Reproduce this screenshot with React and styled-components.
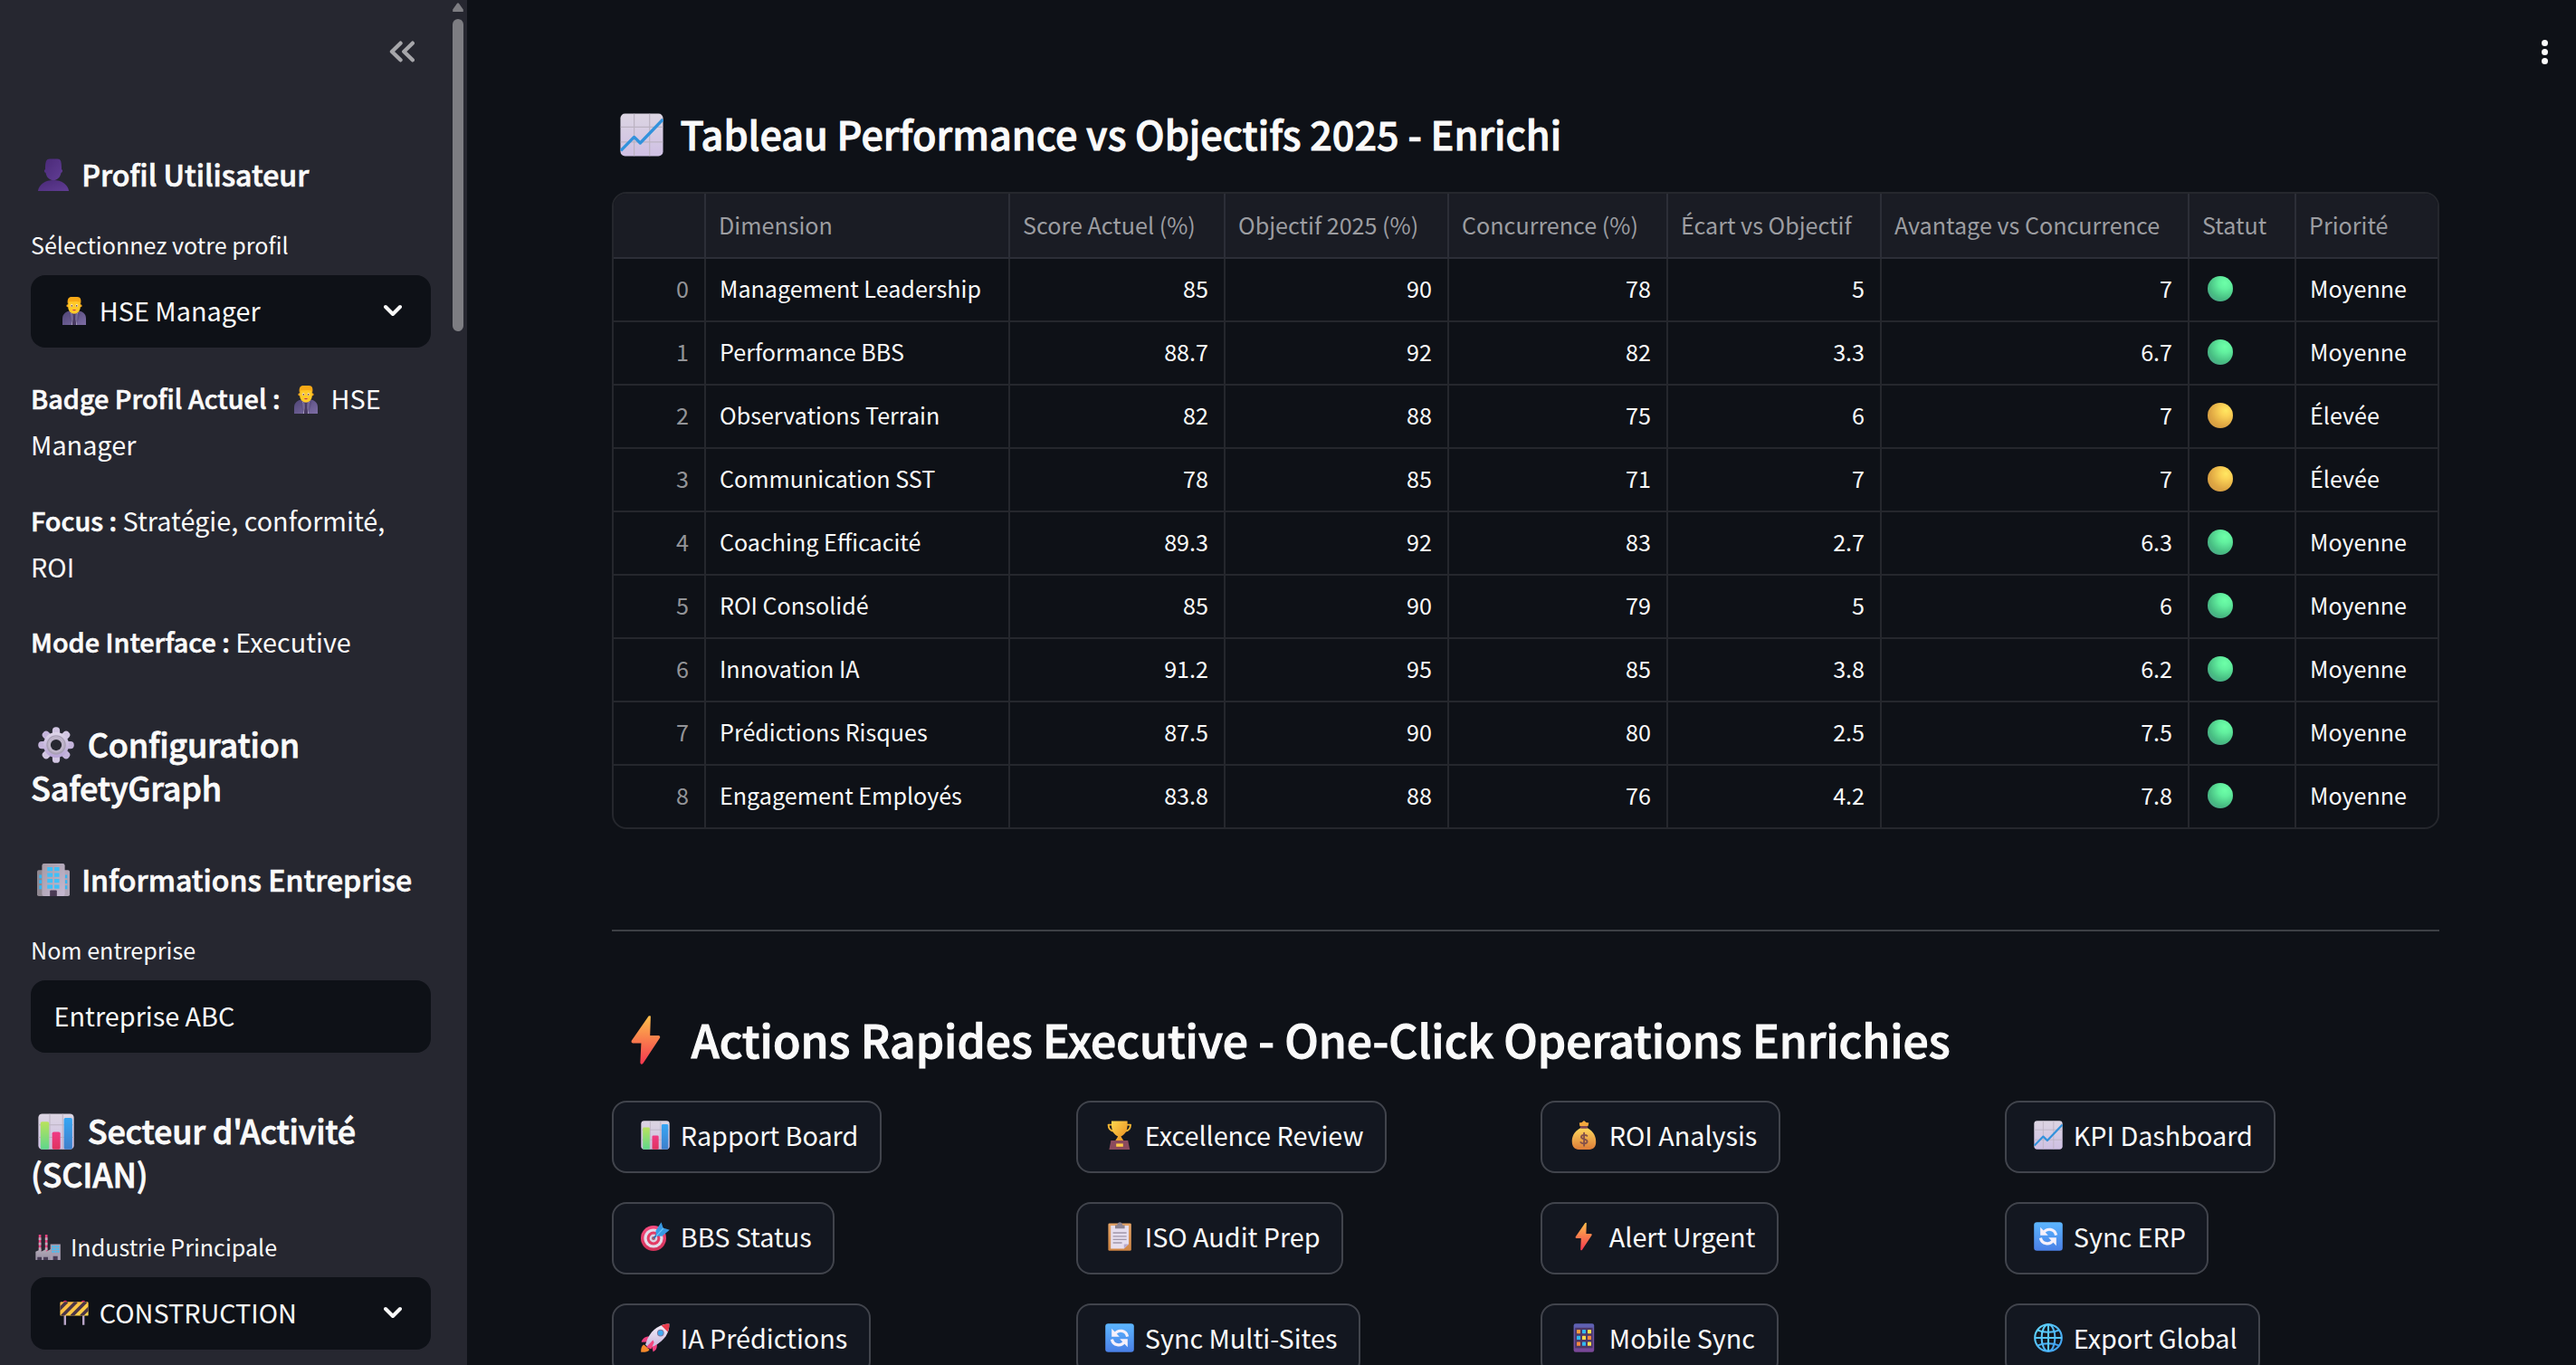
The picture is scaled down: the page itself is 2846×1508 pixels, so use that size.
import React, { useId } from "react";
import styled, { createGlobalStyle } from "styled-components";

const GlobalStyle = createGlobalStyle`
  *, *::before, *::after { box-sizing: border-box; }
  body {
    margin: 0;
    background: #0e1117;
    color: #fafafa;
    font-family: "Noto Sans CJK SC", "Noto Sans", sans-serif;
    font-size: 28.8px;
    -webkit-font-smoothing: antialiased;
  }
  h2, h3, p { margin: 0; }
`;

/* ---------- emoji artwork, all on a 32-unit grid ---------- */

const EmojiSvg = styled.svg`
  display: inline-block;
  flex: none;
  width: ${(p) => p.$size}px;
  height: ${(p) => p.$size}px;
  margin: 0 ${(p) => p.$after}px 0 ${(p) => p.$before}px;
  vertical-align: ${(p) => -0.145 * p.$size}px;
`;

const gradient = (id, from, to, diagonal) => (
  <linearGradient id={id} x1="0" y1="0" x2={diagonal ? "1" : "0"} y2="1">
    <stop offset="0" stopColor={from} />
    <stop offset="1" stopColor={to} />
  </linearGradient>
);

const paper = (id) => (
  <>
    {gradient(id, "#dcd5e2", "#cfc0e4")}
    <rect x="0.3" y="0.3" width="31.4" height="31.4" rx="3.4" fill={`url(#${id})`} />
    <path d="M10.4 0.5V31.5M21.8 0.5V31.5M0.5 10.2H31.5M0.5 21.2H31.5" stroke="#bcb3c2" strokeWidth="0.8" />
  </>
);

const drawings = {
  chartUp: (id) => (
    <>
      {paper(id)}
      <path d="M0.6 27.6L10.4 17.6L14.9 22L31.6 4.6" fill="none" stroke="#3292dc" strokeWidth="2.2" strokeLinejoin="round" />
    </>
  ),
  barChart: (id) => (
    <>
      {paper(id)}
      {gradient(id + "g", "#b9e35c", "#5fd68c")}
      {gradient(id + "b", "#36a6f4", "#3f7fcb")}
      {gradient(id + "p", "#f03a86", "#e0345f")}
      <rect x="2.2" y="7.4" width="7.6" height="24.4" rx="1.4" fill={`url(#${id}g)`} />
      <rect x="12.5" y="16.4" width="7.2" height="15.4" rx="1.4" fill={`url(#${id}p)`} />
      <rect x="22.9" y="4" width="7.4" height="27.8" rx="1.4" fill={`url(#${id}b)`} />
    </>
  ),
  silhouette: (id) => (
    <>
      {gradient(id, "#4a2a78", "#613d94", true)}
      <path d="M8 10.8C8 3 8.8 0.4 12.5 0.4H20C23.4 0.4 24 3 24 10.8C25.6 10.8 25 14 23.6 14C22.8 18.6 19.8 21.4 16 21.4S9.2 18.6 8.4 14C7 14 6.4 10.8 8 10.8Z" fill={`url(#${id})`} />
      <path d="M0.8 32C2 25.6 8 21.4 16 21.4S30 25.6 31.2 32Z" fill={`url(#${id})`} />
    </>
  ),
  manager: (id) => (
    <>
      {gradient(id, "#4f4576", "#7d6da4", true)}
      <path d="M3 32V25C3 19.5 7.5 16.5 12 16.5H20C25 16.5 29 19.5 29 25V32Z" fill={`url(#${id})`} />
      <path d="M12 18.5L16 23L20 18.5L18.8 32H13.2Z" fill="#ded5ea" />
      <path d="M14.8 20H17.2L18.2 32H13.8Z" fill="#483a62" />
      <path d="M9 17.5L13.2 31.8L15.4 21ZM23 17.5L18.8 31.8L16.6 21Z" fill="#5a4f81" opacity="0.8" />
      <circle cx="8.9" cy="10.8" r="1.5" fill="#f2a21c" />
      <circle cx="23.1" cy="10.8" r="1.5" fill="#f2a21c" />
      <path d="M9.2 7C9.2 3 22.8 3 22.8 7V12C22.8 16.4 19.8 19.6 16 19.6S9.2 16.4 9.2 12Z" fill="#ffc928" />
      <path d="M8.8 8.6C8 3.4 10 1 13 1H19.5C23 1 24 4 23.2 8.6L21.5 6.6C18 5 14 6.8 10.4 6.2Z" fill="#f8a916" />
      <ellipse cx="13.2" cy="10.6" rx="1.3" ry="1.6" fill="#fff3d9" />
      <ellipse cx="18.8" cy="10.6" rx="1.3" ry="1.6" fill="#fff3d9" />
      <circle cx="13.3" cy="10.8" r="0.85" fill="#6b4034" />
      <circle cx="18.7" cy="10.8" r="0.85" fill="#6b4034" />
      <path d="M13.8 15.2Q16 14.6 18.2 15.2Q16 17.4 13.8 15.2Z" fill="#c02c57" />
    </>
  ),
  gear: (id) => (
    <>
      {gradient(id, "#ded6e8", "#b7a3d6")}
      <g>
        {[0, 45, 90, 135].map((a) => (
          <rect key={a} x="12.7" y="0.2" width="6.6" height="31.6" rx="3.1" transform={`rotate(${a} 16 16)`} fill={a > 60 ? "#c4b4db" : "#d2c6e2"} />
        ))}
      </g>
      <circle cx="16" cy="16" r="11.2" fill={`url(#${id})`} />
      <circle cx="16" cy="16" r="8.6" fill="#aaa1b6" />
      <circle cx="16" cy="15.6" r="7.4" fill="#bfb5ca" />
      <circle cx="16" cy="16" r="4.9" fill="#262730" />
    </>
  ),
  building: (id) => (
    <>
      {gradient(id, "#a59ba6", "#c6b9d2", true)}
      <rect y="6.4" width="10" height="25.6" rx="1.6" fill="#8f8790" />
      <rect x="22" y="6.4" width="10" height="25.6" rx="1.6" fill="#b0a5b6" />
      {[11, 16.2, 21.6].map((y) => (
        <path key={y} d={`M2 ${y}H4.6V${y + 3.4}H2ZM27.4 ${y}H29.6V${y + 3.4}H27.4Z`} fill="#35b5f2" />
      ))}
      <rect x="4.8" width="22.4" height="32" rx="2" fill={`url(#${id})`} />
      {[3.6, 9.3, 15, 20.8].map((y) => (
        <path key={y} d={`M10 ${y}H15.2V${y + 3.8}H10ZM17 ${y}H21.8V${y + 3.8}H17Z`} fill="#3fc0f8" />
      ))}
      <path d="M12.6 32V27.2Q12.6 26.2 13.6 26.2H18.4Q19.4 26.2 19.4 27.2V32Z" fill="#4a3a54" />
    </>
  ),
  factory: (id) => (
    <>
      {gradient(id, "#b3aab8", "#988fa3")}
      {[4.3, 12.4].map((x) => (
        <g key={x}>
          <rect x={x} width="3" height="22" fill="#e8447f" />
          <path d={`M${x} 3.6h3v3.2h-3zM${x} 10h3v3.2h-3zM${x} 16.4h3v3.2h-3z`} fill="#b9aebb" />
        </g>
      ))}
      <path d="M0.4 32V21.5L7.4 18.2V21.4L13.6 18.2V21.4L19.6 18.4V32Z" fill={`url(#${id})`} />
      <rect x="19" y="12" width="12.8" height="20" fill="#a59cb0" />
      {[13.8, 17, 20.2].map((y) => (
        <path key={y} d={`M21 ${y}h2.4v2.4h-2.4zM24.4 ${y}h2.4v2.4h-2.4zM27.8 ${y}h2.4v2.4h-2.4z`} fill="#42c1f7" />
      ))}
      <path d="M2.6 28.4H8V32H2.6ZM10.4 28.4H16V32H10.4ZM22.4 27H28.2V32H22.4Z" fill="#463a54" />
    </>
  ),
  barrier: (id) => (
    <>
      {gradient(id, "#ffb341", "#ffd94a", true)}
      <clipPath id={id + "c"}><rect x="0.4" y="4.2" width="31.2" height="15.4" rx="1.2" /></clipPath>
      <ellipse cx="6" cy="4.2" rx="2" ry="1.4" fill="#d51f66" />
      <ellipse cx="26" cy="4.2" rx="2" ry="1.4" fill="#d51f66" />
      <path d="M4.6 19H7V29.8H4.6ZM25 19H27.4V29.8H25Z" fill="#b7a4c6" />
      <g clipPath={`url(#${id}c)`}>
        <rect y="4" width="32" height="16" fill={`url(#${id})`} />
        <path d="M-8 20L8 4M2.5 20L18.5 4M13 20L29 4M23.5 20L39.5 4" stroke="#4a3548" strokeWidth="3.6" />
      </g>
    </>
  ),
  bolt: (id) => (
    <>
      {gradient(id, "#fdc04b", "#f5374f")}
      <path d="M18.8 0.9Q17.4 0.2 16.8 1.8L6.6 16.6Q6.4 17.9 7.5 18H12.8L12.2 30.4Q12.9 32 14 30.7L24.7 14.4Q25 13.2 23.8 13.1H18.4Z" fill={`url(#${id})`} />
    </>
  ),
  trophy: (id) => (
    <>
      {gradient(id, "#ffd84f", "#e88a1e", true)}
      <path d="M8 4.6H3.6C3.6 9.4 5.6 11.4 10 11.8M23.6 4.6H28C28 9.4 26 11.4 21.6 11.8" fill="none" stroke="#f3b533" strokeWidth="1.9" strokeLinejoin="round" />
      <path d="M7 0.4H24.6V5C24.6 11.6 21.4 16 17.4 17.4L20.6 22.6H11L14.2 17.4C10.2 16 7 11.6 7 5Z" fill={`url(#${id})`} />
      <path d="M6.4 22H25.2L27.2 32H4.4Z" fill="#8b4b5d" />
      <rect x="12.2" y="25.4" width="7.6" height="3.4" fill="#ffcb48" />
    </>
  ),
  moneyBag: (id) => (
    <>
      {gradient(id, "#ffd75c", "#dc7c38")}
      <path d="M11.4 6.2L10.8 2.4L13.6 2L16 0L18.4 2L21.4 2.4L20.4 6.2Z" fill="#f4a83d" />
      <path d="M12.4 8C4.4 12.4 2.4 18.4 2.8 24C3 29 6 31.9 10 31.9H22C26.4 31.9 29.2 29 29.2 24C29.4 18.4 27.4 12.4 19.6 8Z" fill={`url(#${id})`} />
      <rect x="12" y="6" width="8" height="2.8" rx="1" fill="#7f4650" />
      <path d="M19.4 16.8C18.2 15.4 13 15.3 13 18.2C13 21 19.6 19.6 19.6 23C19.6 26 13.8 26 12.4 24M16.1 13.8V27.8" fill="none" stroke="#85514a" strokeWidth="1.9" strokeLinecap="round" />
    </>
  ),
  target: (id) => (
    <>
      {gradient(id, "#fb4c80", "#cf3158")}
      <circle cx="14" cy="18" r="14" fill={`url(#${id})`} />
      <circle cx="14" cy="18" r="10.6" fill="#e3dbea" />
      <circle cx="14" cy="18" r="7.4" fill="#e33c66" />
      <circle cx="14" cy="18" r="4.4" fill="#dcd1e2" />
      <circle cx="14" cy="18" r="2" fill="#a05a72" />
      <path d="M14.4 17.6L22 9.6" stroke="#2670b8" strokeWidth="2" />
      <path d="M17 15.6L16.4 9.8L22.6 0.2L24.6 6.6L31.8 8.8L23.4 15.8Z" fill="#3799e4" />
      <path d="M17 15.6L25 6.8" stroke="#69c7fb" strokeWidth="1.2" />
    </>
  ),
  clipboard: (id) => (
    <>
      {gradient(id, "#e6a568", "#d08543")}
      <rect x="3.4" y="1.4" width="25.4" height="30.4" rx="1.4" fill={`url(#${id})`} />
      <path d="M6.2 4H26V24.4L20.8 29.4H6.2Z" fill="#e6deee" />
      <path d="M26 24.4L20.8 29.4V25.2Q20.8 24.4 21.6 24.4Z" fill="#b9a9cc" />
      <path d="M8.6 12H23.6M8.6 15.8H23.6M8.6 19.4H23.6M8.6 23H18.6" stroke="#a197aa" strokeWidth="1.3" />
      <path d="M11 3.4H13.2Q14 0.2 16.2 0.2T19.2 3.4H21.6V7.2H11Z" fill="#8d8492" />
    </>
  ),
  sync: (id) => (
    <>
      {gradient(id, "#5cb6ff", "#4a7fe6")}
      <rect x="0.2" y="0.2" width="31.6" height="31.6" rx="3.2" fill={`url(#${id})`} />
      <path d="M10.8 11.4C14.6 6.4 23.2 7.4 24.6 14.6" fill="none" stroke="#f6f0fb" strokeWidth="3.2" />
      <path d="M7.2 5.8V14.8H15.8Z" fill="#f6f0fb" />
      <path d="M21.2 20.8C17.4 25.6 8.8 24.6 7.4 17.6" fill="none" stroke="#f6f0fb" strokeWidth="3.2" />
      <path d="M24.8 26.2V17.2H16.2Z" fill="#f6f0fb" />
    </>
  ),
  rocket: (id) => (
    <>
      {gradient(id, "#f7f2fb", "#c6b4dc")}
      <path d="M3.4 23.6L9.6 29C8 31.6 4.6 32 0.2 31.8C0 28 0.6 25 3.4 23.6Z" fill="#f58a2c" />
      <path d="M9.4 14.4C4.6 14.2 1.6 16.8 0.6 20.8L8 20.6ZM17.8 22.6C18.2 27.4 16.8 30 13.6 31.6L11.8 24Z" fill="#ef3f7f" />
      <path d="M31.4 0.6C21.6 0.6 12.6 6.4 7.4 17L5 23.6L8.8 27.2L15.6 24.6C26 19.2 31.8 10.4 31.4 0.6Z" fill={`url(#${id})`} />
      <path d="M31.4 0.6C28.2 0.6 25.4 1.2 22.6 2.2L29.8 9.4C31 6.4 31.6 3.6 31.4 0.6Z" fill="#ea3a4c" />
      <circle cx="21.8" cy="10.6" r="3.9" fill="#8478a0" />
      <circle cx="21.8" cy="10.6" r="2.9" fill="#3ea8f0" />
      <path d="M13.4 18.6L6 26.2L11.4 28.6L14.6 21Z" fill="#f2467f" />
    </>
  ),
  phone: (id) => (
    <>
      {gradient(id, "#5d62b4", "#7a4696")}
      <rect x="4.6" y="0.2" width="22.6" height="31.6" rx="2.2" fill={`url(#${id})`} />
      <rect x="6.2" y="4.8" width="19.4" height="22.6" fill="#4d3867" />
      {[
        ["#ff9a3d", "#2fb8f3", "#ffe04a"],
        ["#2fb8f3", "#ffd84a", "#ff8a3d"],
        ["#ff8a3d", "#2fb8f3", "#ffe04a"],
      ].map((row, r) =>
        row.map((c, i) => <rect key={`${r}${i}`} x={8 + i * 6} y={7 + r * 6.8} width="4" height="4.2" rx="0.6" fill={c} />)
      )}
    </>
  ),
  globe: (id) => (
    <>
      {gradient(id, "#62d8ff", "#3f9df0", true)}
      <g fill="none" stroke={`url(#${id})`} strokeWidth="2.1">
        <circle cx="16" cy="16" r="14.8" />
        <ellipse cx="16" cy="16" rx="7.4" ry="14.8" />
        <path d="M4.4 7.6C11 10.4 21 10.4 27.6 7.6M4.4 24.4C11 21.6 21 21.6 27.6 24.4" />
      </g>
      <path d="M1.2 16H30.8M16 1.2V30.8" stroke="#57c8fb" strokeWidth="2.1" />
    </>
  ),
};

const Emoji = ({ name, size, before = 0, after = 0 }) => {
  const id = useId().replace(/[^a-zA-Z0-9]/g, "");
  return (
    <EmojiSvg viewBox="0 0 32 32" $size={size} $before={before} $after={after} aria-hidden="true">
      {drawings[name](id)}
    </EmojiSvg>
  );
};

/* ---------- shell ---------- */

const Shell = styled.div`
  display: flex;
  width: 2846px;
  height: 1508px;
  overflow: hidden;
`;

const Sidebar = styled.aside`
  display: flex;
  flex: none;
  width: 516px;
  height: 100%;
  padding: 0 4px 0 34px;
  background: #262730;
  justify-content: space-between;
`;

const SidebarContent = styled.div`
  display: flex;
  flex-direction: column;
  width: 442px;
`;

const SidebarHeader = styled.div`
  display: flex;
  flex: none;
  justify-content: flex-end;
  height: 170px;
  padding: 43px 18px 0 0;
`;

const ScrollTrack = styled.div`
  display: flex;
  flex-direction: column;
  align-items: center;
  width: 12px;
  padding-top: 3px;
  gap: 8px;
`;

const ScrollThumb = styled.div`
  width: 12px;
  height: 345px;
  border-radius: 6px;
  background: #7d7d82;
`;

const SideHeading = styled.h3`
  flex: none;
  margin-top: ${(p) => p.$top}px;
  font-size: ${(p) => (p.$large ? 36 : 32.1)}px;
  line-height: ${(p) => (p.$large ? 48 : 44)}px;
  font-weight: 500;
  -webkit-text-stroke: 0.022em currentColor;
  letter-spacing: ${(p) => (p.$large ? -0.2 : 0)}px;
`;

const Label = styled.div`
  flex: none;
  margin: ${(p) => p.$top ?? 36}px 0 14px;
  font-size: 25.1px;
  line-height: 40px;
`;

const Field = styled.div`
  display: flex;
  flex: none;
  align-items: center;
  height: 80px;
  padding: 0 32px 2.5px 25.6px;
  border-radius: 16px;
  background: #0e1117;
  line-height: 48px;
`;

const FieldText = styled.span`
  flex: 1;
  white-space: nowrap;
`;

const Profile = styled.div`
  display: flex;
  flex: none;
  flex-direction: column;
  gap: 32.2px;
  margin-top: 30px;
  line-height: 51.2px;
`;

const Strong = styled.strong`
  font-weight: 500;
  -webkit-text-stroke: 0.022em currentColor;
`;

const Chevron = () => (
  <svg width="20" height="14" viewBox="0 0 20 14" fill="none" stroke="#fafafa" strokeWidth="4" strokeLinecap="round" strokeLinejoin="round">
    <path d="M2 3L10 11L18 3" />
  </svg>
);

/* ---------- main area ---------- */

const Main = styled.main`
  display: flex;
  flex: none;
  width: 2330px;
  height: 100%;
  padding: 0 31.5px 0 160px;
  justify-content: space-between;
  align-items: flex-start;
`;

const Page = styled.div`
  display: flex;
  flex-direction: column;
  width: 2019px;
  padding-top: 118px;
`;

const KebabButton = styled.div`
  display: flex;
  flex-direction: column;
  gap: 3px;
  padding-top: 43.5px;
`;

const KebabDot = styled.i`
  width: 7px;
  height: 7px;
  border-radius: 50%;
  background: #fafafa;
`;

const TableTitle = styled.h3`
  font-size: 43.2px;
  line-height: 58px;
  font-weight: 500;
  -webkit-text-stroke: 0.022em currentColor;
  white-space: nowrap;
`;

const ActionsTitle = styled.h2`
  font-size: 49.8px;
  line-height: 68px;
  font-weight: 500;
  -webkit-text-stroke: 0.022em currentColor;
  white-space: nowrap;
`;

const Table = styled.div`
  margin-top: 36px;
  height: 704px;
  border: 2px solid #25272d;
  border-radius: 16px;
  overflow: hidden;
  font-size: 25.13px;
`;

const Row = styled.div`
  display: grid;
  grid-template-columns: 102px 336px 238px 247px 242px 236px 340px 118px 156px;
  height: ${(p) => (p.$head ? 72 : 70)}px;
  color: ${(p) => (p.$head ? "#9c9da1" : "#fafafa")};
  background: ${(p) => (p.$head ? "#1a1c24" : "transparent")};
`;

const Cell = styled.div`
  display: flex;
  align-items: center;
  justify-content: ${(p) => (p.$right ? "flex-end" : "flex-start")};
  padding: 0 17px ${(p) => (p.$head ? 2 : 4)}px ${(p) => (p.$head ? 14 : 15)}px;
  border-right: 2px solid ${(p) => (p.$head ? "#2c2e37" : "#25272d")};
  border-bottom: 2px solid ${(p) => (p.$head ? "#2c2e37" : "#25272d")};
  color: ${(p) => (p.$muted ? "#939498" : "inherit")};
  white-space: nowrap;

  &:last-child { border-right: 0; }
  ${Row}:last-child > & { border-bottom-color: transparent; }
`;

const StatusDot = styled.span`
  width: 28px;
  height: 28px;
  margin: 2px 0 0 5px;
  border-radius: 50%;
  background: ${(p) =>
    p.$level === "green"
      ? "radial-gradient(circle at 68% 28%, #6dffa8 0%, #62f09f 25%, #48be83 62%, #4c9d8b 92%, #5a9a9c 100%)"
      : "radial-gradient(circle at 72% 30%, #ffe761 0%, #fbd256 22%, #dfa743 60%, #cf9844 88%, #cd7f68 100%)"};
`;

const Divider = styled.hr`
  width: 100%;
  height: 2px;
  margin: 111px 0 84px;
  border: 0;
  background: #3d4045;
`;

const ActionGrid = styled.div`
  display: grid;
  grid-template-columns: repeat(4, 481px);
  gap: 32px;
  margin-top: 35px;
  justify-items: start;
`;

const ActionButton = styled.button`
  display: flex;
  align-items: center;
  height: 80px;
  padding: 0 23.6px 3.5px 24px;
  border: 2px solid #41444c;
  border-radius: 16px;
  background: #131720;
  color: #fafafa;
  font: inherit;
  letter-spacing: -0.03px;
  line-height: 48px;
  white-space: nowrap;
`;

const columns = [
  "", "Dimension", "Score Actuel (%)", "Objectif 2025 (%)", "Concurrence (%)",
  "Écart vs Objectif", "Avantage vs Concurrence", "Statut", "Priorité",
];

const rows = [
  ["Management Leadership", "85", "90", "78", "5", "7", "green", "Moyenne"],
  ["Performance BBS", "88.7", "92", "82", "3.3", "6.7", "green", "Moyenne"],
  ["Observations Terrain", "82", "88", "75", "6", "7", "yellow", "Élevée"],
  ["Communication SST", "78", "85", "71", "7", "7", "yellow", "Élevée"],
  ["Coaching Efficacité", "89.3", "92", "83", "2.7", "6.3", "green", "Moyenne"],
  ["ROI Consolidé", "85", "90", "79", "5", "6", "green", "Moyenne"],
  ["Innovation IA", "91.2", "95", "85", "3.8", "6.2", "green", "Moyenne"],
  ["Prédictions Risques", "87.5", "90", "80", "2.5", "7.5", "green", "Moyenne"],
  ["Engagement Employés", "83.8", "88", "76", "4.2", "7.8", "green", "Moyenne"],
];

const actions = [
  ["barChart", "Rapport Board"], ["trophy", "Excellence Review"], ["moneyBag", "ROI Analysis"], ["chartUp", "KPI Dashboard"],
  ["target", "BBS Status"], ["clipboard", "ISO Audit Prep"], ["bolt", "Alert Urgent"], ["sync", "Sync ERP"],
  ["rocket", "IA Prédictions"], ["sync", "Sync Multi-Sites"], ["phone", "Mobile Sync"], ["globe", "Export Global"],
];

export default function App() {
  return (
    <>
      <GlobalStyle />
      <Shell>
        <Sidebar>
          <SidebarContent>
            <SidebarHeader>
              <svg width="28" height="28" viewBox="0 0 28 28" fill="none" stroke="#a6a6aa" strokeWidth="4.4" strokeLinecap="round" strokeLinejoin="round">
                <path d="M12.5 4.7L3 14L12.5 23.3M25.8 4.7L16.3 14L25.8 23.3" />
              </svg>
            </SidebarHeader>
            <SideHeading $top={0}>
              <Emoji name="silhouette" size={36} before={7} after={13.2} />Profil Utilisateur
            </SideHeading>
            <Label>Sélectionnez votre profil</Label>
            <Field>
              <Emoji name="manager" size={32} before={6.4} after={11.8} />
              <FieldText>HSE Manager</FieldText>
              <Chevron />
            </Field>
            <Profile>
              <p>
                <Strong>Badge Profil Actuel :</Strong>
                <Emoji name="manager" size={32} before={12} after={12} />HSE Manager
              </p>
              <p><Strong>Focus :</Strong> Stratégie, conformité, ROI</p>
              <p><Strong>Mode Interface :</Strong> Executive</p>
            </Profile>
            <SideHeading $large $top={62.6}>
              <Emoji name="gear" size={40} before={7.5} after={15.2} />Configuration SafetyGraph
            </SideHeading>
            <SideHeading $top={56}>
              <Emoji name="building" size={36} before={7} after={13.2} />Informations Entreprise
            </SideHeading>
            <Label>Nom entreprise</Label>
            <Field><FieldText>Entreprise ABC</FieldText></Field>
            <SideHeading $large $top={61}>
              <Emoji name="barChart" size={40} before={7.5} after={15.2} />Secteur d'Activité (SCIAN)
            </SideHeading>
            <Label $top={37}>
              <Emoji name="factory" size={28} before={5} after={11} />Industrie Principale
            </Label>
            <Field>
              <Emoji name="barrier" size={32} before={6.4} after={11.8} />
              <FieldText>CONSTRUCTION</FieldText>
              <Chevron />
            </Field>
          </SidebarContent>
          <ScrollTrack>
            <svg width="12" height="10" viewBox="0 0 12 10" fill="#7d7d82">
              <path d="M4.8 1.1Q6 -0.8 7.2 1.1L11.8 7.6V10H0.2V7.6Z" />
            </svg>
            <ScrollThumb />
          </ScrollTrack>
        </Sidebar>
        <Main>
          <Page>
            <TableTitle>
              <Emoji name="chartUp" size={48} before={9} after={18.6} />Tableau Performance vs Objectifs 2025 - Enrichi
            </TableTitle>
            <Table>
              <Row $head>
                {columns.map((c) => <Cell key={c} $head>{c}</Cell>)}
              </Row>
              {rows.map((r, n) => (
                <Row key={r[0]}>
                  <Cell $right $muted>{n}</Cell>
                  <Cell>{r[0]}</Cell>
                  {r.slice(1, 6).map((v, i) => <Cell key={i} $right>{v}</Cell>)}
                  <Cell><StatusDot $level={r[6]} /></Cell>
                  <Cell>{r[7]}</Cell>
                </Row>
              ))}
            </Table>
            <Divider />
            <ActionsTitle>
              <Emoji name="bolt" size={56} before={9.5} after={22.2} />Actions Rapides Executive - One-Click Operations Enrichies
            </ActionsTitle>
            <ActionGrid>
              {actions.map(([icon, text]) => (
                <ActionButton key={text}>
                  <Emoji name={icon} size={32} before={5.7} after={12.1} />
                  {text}
                </ActionButton>
              ))}
            </ActionGrid>
          </Page>
          <KebabButton><KebabDot /><KebabDot /><KebabDot /></KebabButton>
        </Main>
      </Shell>
    </>
  );
}
